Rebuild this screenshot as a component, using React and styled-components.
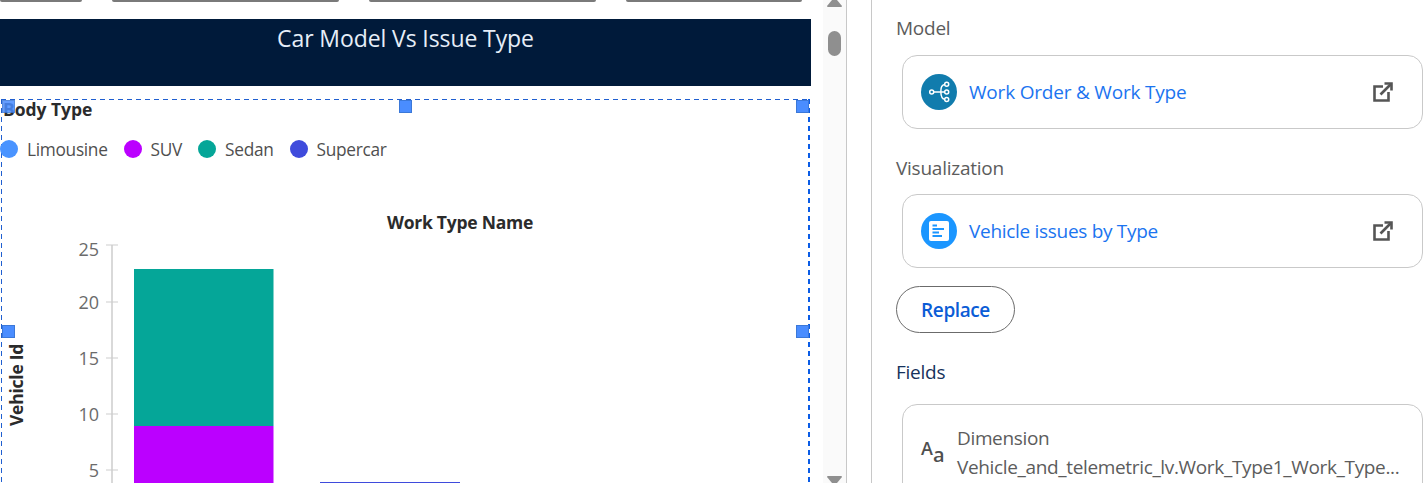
import React from 'react';
import styled, { createGlobalStyle } from 'styled-components';

const GlobalStyle = createGlobalStyle`
  html, body {
    margin: 0;
    padding: 0;
    background: #fff;
    overflow: hidden;
  }
  body {
    font-family: "Open Sans", "Noto Sans", sans-serif;
  }
`;

const Page = styled.div`
  display: flex;
  width: 1423px;
  height: 483px;
  overflow: hidden;
`;

const Canvas = styled.div`
  width: 823px;
  flex: none;
  display: flex;
  flex-direction: column;
  overflow: hidden;
`;

const TabRow = styled.div`
  display: flex;
  gap: 30px;
  height: 19px;
  flex: none;
`;

const TabEdge = styled.div`
  width: ${(p) => p.$width}px;
  height: 2px;
  background: #7a7a7a;
  border-radius: 0 0 3px 3px;
`;

const TitleBar = styled.div`
  width: 811px;
  height: 67px;
  flex: none;
  background: #001a3a;
  color: #e6eef8;
  font-size: 23px;
  letter-spacing: -0.1px;
  text-align: center;
  padding-top: 3px;
  line-height: 32px;
  box-sizing: border-box;
`;

const ChartBox = styled.div`
  position: relative;
  flex: none;
  width: 809px;
  height: 420px;
  margin-top: 13px;
  margin-left: 1px;
  padding: 1px 0 0 1px;
  box-sizing: border-box;
  background-image:
    linear-gradient(to right, #1f5fd0 5px, transparent 5px),
    linear-gradient(to bottom, #1f5fd0 5px, transparent 5px),
    linear-gradient(to bottom, #0a5ce6 5px, transparent 5px);
  background-size: 9px 1px, 1px 9px, 2px 9px;
  background-position: 0 0, 0 0, 100% 0;
  background-repeat: repeat-x, repeat-y, repeat-y;
`;

const Handle = styled.span`
  position: absolute;
  width: 13px;
  height: 13px;
  top: ${(p) => p.$top}px;
  left: ${(p) => p.$left}px;
  background: #4a8dff;
  border: 1px solid #3b78d8;
  box-sizing: border-box;
  opacity: ${(p) => p.$faded ? 0.85 : 1};
`;

const LegendTitle = styled.div`
  font-size: 17.5px;
  font-weight: 700;
  color: #2b2b2b;
  letter-spacing: -0.05px;
  line-height: 18px;
  padding-left: 1px;
`;

const Legend = styled.div`
  display: flex;
  align-items: center;
  gap: 16px;
  margin-top: 20px;
  height: 22px;
  margin-left: -2px;
`;

const LegendItem = styled.div`
  display: flex;
  align-items: center;
  gap: 9px;
  font-size: 17.3px;
  letter-spacing: -0.3px;
  color: #4f4f4f;
`;

const Dot = styled.span`
  width: 18px;
  height: 18px;
  border-radius: 50%;
  background: ${(p) => p.$color};
`;

const Plot = styled.svg`
  display: block;
  margin-top: 39px;
  margin-left: -2px;
  text {
    font-family: "Open Sans", "Noto Sans", sans-serif;
  }
`;

const Track = styled.div`
  width: 24px;
  flex: none;
  height: 483px;
  background: #fafafa;
  box-sizing: border-box;
  border-right: 1px solid #c8c8c8;
  display: flex;
  flex-direction: column;
  align-items: center;
`;

const Arrow = styled.svg`
  display: block;
  flex: none;
`;

const Thumb = styled.div`
  width: 13px;
  height: 25px;
  border-radius: 7px;
  background: #8f8f8f;
  margin-top: 24px;
`;

const TrackFill = styled.div`
  flex: 1;
`;

const Gutter = styled.div`
  width: 25px;
  flex: none;
  border-right: 1px solid #c8c8c8;
  box-sizing: border-box;
`;

const Panel = styled.div`
  flex: none;
  width: 551px;
  padding: 16px 0 0 24px;
  box-sizing: border-box;
  display: flex;
  flex-direction: column;
`;

const Label = styled.div`
  flex: none;
  font-size: 19px;
  letter-spacing: -0.25px;
  line-height: 24px;
  color: ${(p) => p.$dark ? '#16325c' : '#5c5c5c'};
  margin-top: ${(p) => p.$top || 0}px;
`;

const Card = styled.div`
  display: flex;
  align-items: center;
  width: 521px;
  height: 74px;
  margin-left: 6px;
  margin-top: ${(p) => p.$top || 0}px;
  flex: none;
  padding: 0 29px 0 18px;
  box-sizing: border-box;
  border: 1px solid #c9c9c9;
  border-radius: 15px;
  background: #fff;
`;

const CardIcon = styled.span`
  width: 36px;
  height: 36px;
  flex: none;
  border-radius: 50%;
  background: ${(p) => p.$color};
  display: flex;
  align-items: center;
  justify-content: center;
`;

const CardLink = styled.span`
  flex: 1;
  margin-left: 12px;
  color: #1b74f0;
  font-size: 19px;
  letter-spacing: ${(p) => p.$tight ? -0.3 : -0.2}px;
`;

const ReplaceButton = styled.button`
  flex: none;
  align-self: flex-start;
  width: 119px;
  height: 47px;
  margin-top: 18px;
  background: #fff;
  border: 1px solid #6b6b6b;
  border-radius: 24px;
  color: #0b5cd6;
  font-family: inherit;
  font-size: 19px;
  font-weight: 600;
  letter-spacing: -0.4px;
  padding: 0;
`;

const FieldCard = styled(Card)`
  height: 120px;
  align-items: flex-start;
  padding-top: 19px;
`;

const FieldGlyph = styled.span`
  flex: none;
  width: 25px;
  margin-top: 15px;
  display: flex;
  color: #4f4f4f;
  line-height: 1;
`;

const GlyphBig = styled.span`
  font-size: 18px;
  font-weight: 600;
`;

const GlyphSmall = styled.span`
  font-size: 20px;
  font-weight: 600;
  margin-top: 6px;
`;

const FieldText = styled.div`
  margin-left: 11px;
  color: #5c5c5c;
  font-size: 19px;
  letter-spacing: -0.35px;
  line-height: 29px;
  white-space: nowrap;
`;

const ExternalIcon = () => (
  <svg width="20" height="20" viewBox="0 0 20 20" fill="none" stroke="#555" strokeWidth="2.6">
    <path d="M10 4.5H1.5V18.5H15.5V10" />
    <path d="M7.5 12.5L18 2" />
    <path d="M11.5 1.5H18.5V8.5" />
  </svg>
);

const ticks = [
  { label: '25', y: 46, labelY: 57 },
  { label: '20', y: 103, labelY: 109.5 },
  { label: '15', y: 159, labelY: 165.5 },
  { label: '10', y: 215, labelY: 221.5 },
  { label: '5', y: 271, labelY: 277.5 },
];

const BarChart = () => (
  <Plot width="810" height="290" viewBox="0 0 810 290">
    <text x="460" y="30" textAnchor="middle" fontSize="17.5" fontWeight="700" fill="#2b2b2b" letterSpacing="-0.25">Work Type Name</text>
    <text transform="translate(23 227) rotate(-90)" fontSize="17.5" fontWeight="700" fill="#2b2b2b" letterSpacing="-0.25">Vehicle Id</text>
    <path d="M112 46V290" stroke="#cdcdcd" strokeWidth="1.5" />
    {ticks.map((t) => (
      <g key={t.label}>
        <path d={`M106 ${t.y}H118`} stroke="#cdcdcd" strokeWidth="1" />
        <text x="99" y={t.labelY} textAnchor="end" fontSize="18" fill="#6b6b6b">{t.label}</text>
      </g>
    ))}
    <rect x="134" y="70" width="139.5" height="157" fill="#05a698" />
    <rect x="134" y="227" width="139.5" height="63" fill="#bb00ff" />
    <rect x="320" y="283" width="140" height="7" fill="#3f4bdc" />
  </Plot>
);

export default function App() {
  return (
    <>
      <GlobalStyle />
      <Page>
        <Canvas>
          <TabRow>
            <TabEdge $width={82} />
            <TabEdge $width={227} />
            <TabEdge $width={227} />
            <TabEdge $width={176} />
          </TabRow>
          <TitleBar>Car Model Vs Issue Type</TitleBar>
          <ChartBox>
            <LegendTitle>Body Type</LegendTitle>
            <Legend>
              <LegendItem><Dot $color="#4a94ff" />Limousine</LegendItem>
              <LegendItem><Dot $color="#bb00ff" />SUV</LegendItem>
              <LegendItem><Dot $color="#05a698" />Sedan</LegendItem>
              <LegendItem><Dot $color="#3f4bdc" />Supercar</LegendItem>
            </Legend>
            <BarChart />
            <Handle $top={1} $left={1} $faded />
            <Handle $top={1} $left={398} />
            <Handle $top={1} $left={795} />
            <Handle $top={226} $left={1} />
            <Handle $top={226} $left={795} />
          </ChartBox>
        </Canvas>
        <Track>
          <Arrow width="15" height="7" viewBox="0 0 15 7"><path d="M5 0H10L15 6Q15 7 14 7H1Q0 7 0 6Z" fill="#8f8f8f" /></Arrow>
          <Thumb />
          <TrackFill />
          <Arrow width="15" height="7" viewBox="0 0 15 7"><path d="M1 0H14Q15 0 15 1L10 7H5L0 1Q0 0 1 0Z" fill="#8f8f8f" /></Arrow>
        </Track>
        <Gutter />
        <Panel>
          <Label>Model</Label>
          <Card $top={15}>
            <CardIcon $color="#117cad">
              <svg width="36" height="36" viewBox="0 0 36 36" fill="none" stroke="#fff" strokeWidth="1.5">
                <circle cx="10.7" cy="18" r="2" />
                <circle cx="25.7" cy="10.3" r="2" />
                <circle cx="25.7" cy="18" r="2" />
                <circle cx="25.7" cy="25.5" r="2" />
                <path d="M12.7 18H23.7M23.8 10.6C18 11 19 25 23.8 25.2" />
              </svg>
            </CardIcon>
            <CardLink>Work Order &amp; Work Type</CardLink>
            <ExternalIcon />
          </Card>
          <Label $top={27}>Visualization</Label>
          <Card $top={14}>
            <CardIcon $color="#1b96ff">
              <svg width="20" height="20" viewBox="0 0 20 20">
                <rect width="20" height="20" rx="2" fill="#fff" />
                <path d="M3.5 4.5H8M3.5 8H15M3.5 11.5H10M3.5 15H13" stroke="#1b96ff" strokeWidth="1.8" />
              </svg>
            </CardIcon>
            <CardLink $tight>Vehicle issues by Type</CardLink>
            <ExternalIcon />
          </Card>
          <ReplaceButton>Replace</ReplaceButton>
          <Label $dark $top={27}>Fields</Label>
          <FieldCard $top={20}>
            <FieldGlyph><GlyphBig>A</GlyphBig><GlyphSmall>a</GlyphSmall></FieldGlyph>
            <FieldText>
              Dimension
              <br />
              Vehicle_and_telemetric_lv.Work_Type1_Work_Type...
            </FieldText>
          </FieldCard>
        </Panel>
      </Page>
    </>
  );
}
